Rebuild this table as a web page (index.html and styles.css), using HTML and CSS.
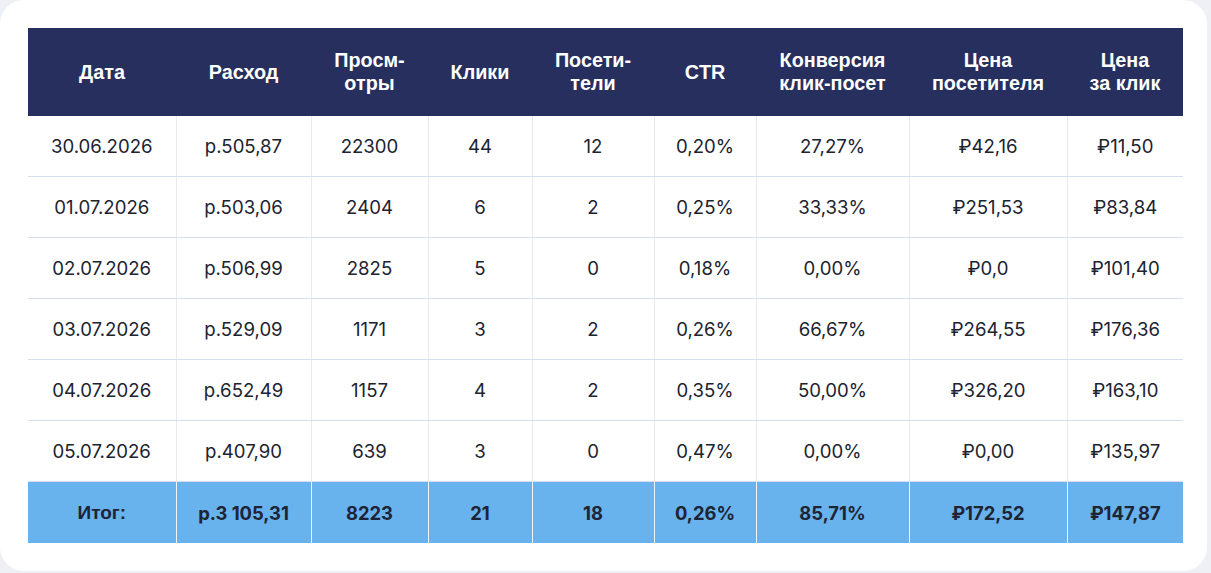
FILE: index.html
```html
<!DOCTYPE html>
<html lang="ru">
<head>
<meta charset="utf-8">
<title>Статистика</title>
<link rel="stylesheet" href="styles.css">
</head>
<body>
<div class="card">
  <table class="stats">
    <colgroup>
      <col class="c1"><col class="c2"><col class="c3"><col class="c4"><col class="c5"><col class="c6"><col class="c7"><col class="c8"><col class="c9">
    </colgroup>
    <thead>
      <tr>
        <th>Дата</th>
        <th>Расход</th>
        <th>Просм-<br>отры</th>
        <th>Клики</th>
        <th>Посети-<br>тели</th>
        <th>CTR</th>
        <th>Конверсия<br>клик-посет</th>
        <th>Цена<br>посетителя</th>
        <th>Цена<br>за клик</th>
      </tr>
    </thead>
    <tbody>
      <tr><td>30.06.2026</td><td>р.505,87</td><td>22300</td><td>44</td><td>12</td><td>0,20%</td><td>27,27%</td><td>₽42,16</td><td>₽11,50</td></tr>
      <tr><td>01.07.2026</td><td>р.503,06</td><td>2404</td><td>6</td><td>2</td><td>0,25%</td><td>33,33%</td><td>₽251,53</td><td>₽83,84</td></tr>
      <tr><td>02.07.2026</td><td>р.506,99</td><td>2825</td><td>5</td><td>0</td><td>0,18%</td><td>0,00%</td><td>₽0,0</td><td>₽101,40</td></tr>
      <tr><td>03.07.2026</td><td>р.529,09</td><td>1171</td><td>3</td><td>2</td><td>0,26%</td><td>66,67%</td><td>₽264,55</td><td>₽176,36</td></tr>
      <tr><td>04.07.2026</td><td>р.652,49</td><td>1157</td><td>4</td><td>2</td><td>0,35%</td><td>50,00%</td><td>₽326,20</td><td>₽163,10</td></tr>
      <tr><td>05.07.2026</td><td>р.407,90</td><td>639</td><td>3</td><td>0</td><td>0,47%</td><td>0,00%</td><td>₽0,00</td><td>₽135,97</td></tr>
    </tbody>
    <tfoot>
      <tr><td class="label">Итог:</td><td>р.3 105,31</td><td>8223</td><td>21</td><td>18</td><td>0,26%</td><td>85,71%</td><td>₽172,52</td><td>₽147,87</td></tr>
    </tfoot>
  </table>
</div>
</body>
</html>
```

FILE: styles.css
```css
html, body {
  margin: 0;
  padding: 0;
}
body {
  background: #eff0f5;
  width: 1211px;
  height: 573px;
  overflow: hidden;
}
.card {
  box-sizing: border-box;
  width: 1207px;
  height: 571px;
  background: #ffffff;
  border-radius: 24px;
  padding: 28px 0 0 28px;
}
.stats {
  width: 1155px;
  table-layout: fixed;
  border-collapse: collapse;
  font-family: Inter, "Noto Sans", sans-serif;
  font-size: 18.6px;
  color: #20232f;
}
.c1 { width: 148px; }
.c2 { width: 135px; }
.c3 { width: 117px; }
.c4 { width: 104px; }
.c5 { width: 122px; }
.c6 { width: 102px; }
.c7 { width: 153px; }
.c8 { width: 158px; }
.c9 { width: 116px; }
.stats th {
  height: 88px;
  padding: 0;
  background: #262f5d;
  color: #ffffff;
  font-family: "Liberation Sans", Arial, sans-serif;
  font-weight: 700;
  font-size: 19.8px;
  line-height: 23px;
  text-align: center;
  vertical-align: middle;
}
.stats tbody td {
  height: 60px;
  padding: 0;
  text-align: center;
  vertical-align: middle;
  border-left: 1px solid #e9ebf4;
  border-bottom: 1px solid #d8def0;
  font-weight: 400;
}
.stats tbody tr td:first-child {
  border-left: none;
}
.stats tfoot td {
  height: 61px;
  padding: 0;
  background: #68b2ee;
  text-align: center;
  vertical-align: middle;
  border-left: 1px solid #eef4fc;
  font-weight: 650;
  font-size: 18.4px;
  color: #1d2433;
}
.stats tfoot td:first-child {
  border-left: none;
}
.stats tfoot td.label {
  font-family: "Liberation Sans", Arial, sans-serif;
  font-weight: 700;
  font-size: 19px;
}
```
